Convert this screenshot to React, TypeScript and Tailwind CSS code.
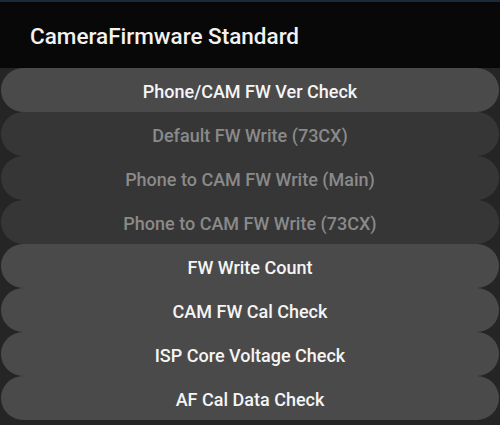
const items = [
  { label: "Phone/CAM FW Ver Check", enabled: true },
  { label: "Default FW Write (73CX)", enabled: false },
  { label: "Phone to CAM FW Write (Main)", enabled: false },
  { label: "Phone to CAM FW Write (73CX)", enabled: false },
  { label: "FW Write Count", enabled: true },
  { label: "CAM FW Cal Check", enabled: true },
  { label: "ISP Core Voltage Check", enabled: true },
  { label: "AF Cal Data Check", enabled: true },
];

export default function App() {
  return (
    <div className="flex h-[425px] w-[500px] flex-col overflow-hidden bg-[#252525] font-['Roboto',sans-serif]">
      <div className="h-[2px] bg-[#1b2a3b]" />
      <header className="flex h-[66px] items-center bg-[#080808] pl-[30px] pt-[4px]">
        <h1 className="text-[22.5px] font-medium text-[#f2f2f2]">CameraFirmware Standard</h1>
      </header>
      <div className="flex flex-col">
        {items.map((item) => (
          <button
            key={item.label}
            disabled={!item.enabled}
            className={
              item.enabled
                ? "mx-[1px] flex h-[44px] items-center justify-center rounded-[22px] bg-[#4a4a4a] pt-[3px] text-[18px] font-medium text-[#f5f5f5]"
                : "mx-[1px] flex h-[44px] items-center justify-center rounded-[22px] bg-[#363636] pt-[3px] text-[18px] font-medium text-[#8a8a8a]"
            }
          >
            {item.label}
          </button>
        ))}
      </div>
    </div>
  );
}
